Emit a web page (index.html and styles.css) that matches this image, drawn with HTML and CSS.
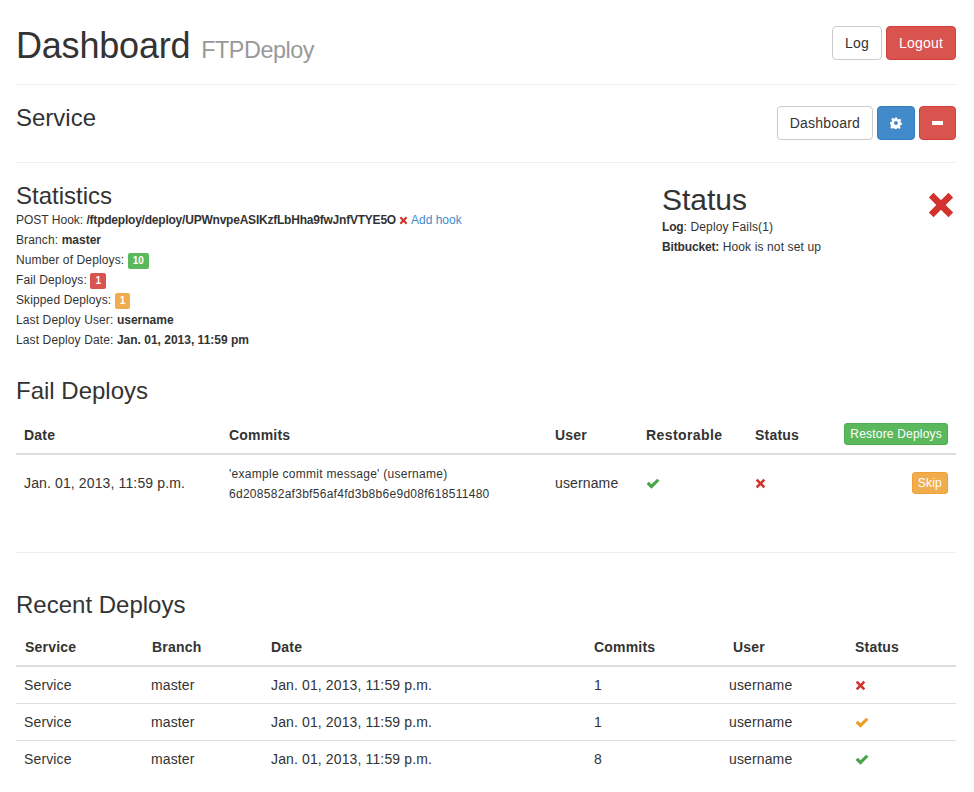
FILE: index.html
```html
<!DOCTYPE html>
<html>
<head>
  <title>FTPDeploy - Dashboard</title>
  <link rel="stylesheet" href="styles.css">
</head>
<body>
  <svg class="defs" width="0" height="0">
    <symbol id="i-remove" viewBox="0 0 24 24"><path d="M5.6 1.6 12 8l6.4-6.4 4 4L16 12l6.4 6.4-4 4L12 16l-6.4 6.4-4-4L8 12 1.6 5.6z"/></symbol>
    <symbol id="i-ok" viewBox="0 0 24 24"><path d="M1 13.5 4.8 9.700 9.400 14.300 19.200 4.500 23 8.300 9.400 21.900z"/></symbol>
    <symbol id="i-cog" viewBox="0 0 24 24"><path fill-rule="evenodd" d="M10 1h4l.7 3.200 2.100.9 2.800-1.800 2.800 2.800-1.800 2.800.9 2.100L23.700 11.700v3.900l-3.200.7-.9 2.100 1.800 2.800-2.800 2.800-2.800-1.800-2.100.9-.7 2.800h-4l-.7-3.200-2.100-.9-2.800 1.800-2.800-2.800 1.800-2.800-.9-2.100L.3 14v-4l3.200-.7.9-2.100-1.800-2.800 2.800-2.800 2.800 1.800 2.100-.9zM12 8a4 4 0 1 0 0 8 4 4 0 0 0 0-8z"/></symbol>
  </svg>

  <header class="page-header">
    <h1>Dashboard <small>FTPDeploy</small></h1>
    <div class="btn-row">
      <a class="btn btn-default">Log</a>
      <a class="btn btn-danger">Logout</a>
    </div>
  </header>

  <section class="service-bar">
    <h3>Service</h3>
    <div class="btn-row">
      <a class="btn btn-default">Dashboard</a>
      <a class="btn btn-primary btn-icon"><svg class="icon icon-cog"><use href="#i-cog"/></svg></a>
      <a class="btn btn-danger btn-icon btn-minus"><span class="minus"></span></a>
    </div>
  </section>

  <section class="overview">
    <div class="stats">
      <h3>Statistics</h3>
      <div class="line hook-line">POST Hook: <b class="hook">/ftpdeploy/deploy/UPWnvpeASIKzfLbHha9fwJnfVTYE5O</b> <svg class="icon icon-sm red"><use href="#i-remove"/></svg> <a class="link">Add hook</a></div>
      <div class="line">Branch: <b>master</b></div>
      <div class="line">Number of Deploys: <span class="label green">10</span></div>
      <div class="line">Fail Deploys: <span class="label danger">1</span></div>
      <div class="line">Skipped Deploys: <span class="label warning">1</span></div>
      <div class="line">Last Deploy User: <b>username</b></div>
      <div class="line">Last Deploy Date: <b>Jan. 01, 2013, 11:59 pm</b></div>
    </div>
    <div class="status">
      <div>
        <h2>Status</h2>
        <div class="line"><b>Log</b>: Deploy Fails(1)</div>
        <div class="line"><b>Bitbucket:</b> Hook is not set up</div>
      </div>
      <svg class="icon icon-big red"><use href="#i-remove"/></svg>
    </div>
  </section>

  <section class="fails">
    <h3>Fail Deploys</h3>
    <table class="table fail-table">
      <colgroup>
        <col class="c-date"><col class="c-commits"><col class="c-user"><col class="c-restore"><col class="c-status"><col>
      </colgroup>
      <thead>
        <tr>
          <th>Date</th>
          <th>Commits</th>
          <th>User</th>
          <th class="th-wide">Restorable</th>
          <th>Status</th>
          <th class="right"><a class="btn btn-xs btn-success">Restore Deploys</a></th>
        </tr>
      </thead>
      <tbody>
        <tr>
          <td>Jan. 01, 2013, 11:59 p.m.</td>
          <td class="commit">'example commit message' (username)<br>6d208582af3bf56af4fd3b8b6e9d08f618511480</td>
          <td>username</td>
          <td><svg class="icon icon-ok green-i"><use href="#i-ok"/></svg></td>
          <td><svg class="icon icon-x red"><use href="#i-remove"/></svg></td>
          <td class="right"><a class="btn btn-xs btn-warning">Skip</a></td>
        </tr>
      </tbody>
    </table>
  </section>

  <section class="recent">
    <h3>Recent Deploys</h3>
    <table class="table recent-table">
      <colgroup>
        <col class="r-service"><col class="r-branch"><col class="r-date"><col class="r-commits"><col class="r-user"><col>
      </colgroup>
      <thead>
        <tr>
          <th>Service</th>
          <th>Branch</th>
          <th>Date</th>
          <th>Commits</th>
          <th class="th-user">User</th>
          <th>Status</th>
        </tr>
      </thead>
      <tbody>
        <tr>
          <td>Service</td><td>master</td><td>Jan. 01, 2013, 11:59 p.m.</td><td>1</td><td>username</td>
          <td><svg class="icon icon-x red"><use href="#i-remove"/></svg></td>
        </tr>
        <tr>
          <td>Service</td><td>master</td><td>Jan. 01, 2013, 11:59 p.m.</td><td>1</td><td>username</td>
          <td><svg class="icon icon-ok orange"><use href="#i-ok"/></svg></td>
        </tr>
        <tr>
          <td>Service</td><td>master</td><td>Jan. 01, 2013, 11:59 p.m.</td><td>8</td><td>username</td>
          <td><svg class="icon icon-ok green-i"><use href="#i-ok"/></svg></td>
        </tr>
      </tbody>
    </table>
  </section>
</body>
</html>
```

FILE: styles.css
```css
* {
  box-sizing: border-box;
}

body {
  font-family: "Liberation Sans", Arial, sans-serif;
  font-size: 14px;
  line-height: 20px;
  color: #333;
  background-color: #fff;
  margin: 0;
  padding: 0 18px 0 16px;
}

.defs {
  position: absolute;
}

h1, h2, h3 {
  font-weight: 500;
  line-height: 1.1;
  margin: 0;
}

h1 {
  font-size: 36px;
  letter-spacing: -0.2px;
}

h1 small {
  margin-left: 1px;
  font-size: 23.4px;
  font-weight: 400;
  letter-spacing: -0.45px;
  color: #999;
}

h2 {
  font-size: 30px;
}

h3 {
  font-size: 24px;
}

.page-header {
  display: flex;
  justify-content: space-between;
  height: 85px;
  padding-top: 26px;
  border-bottom: 1px solid #eee;
}

.service-bar {
  display: flex;
  justify-content: space-between;
  height: 78px;
  padding-top: 20px;
  border-bottom: 1px solid #eee;
}

.btn-row {
  display: flex;
  gap: 4px;
}

.service-bar .btn-row {
  margin-top: 1px;
}

.btn {
  display: inline-flex;
  align-items: center;
  justify-content: center;
  height: 34px;
  padding: 6px 12px;
  font-size: 14px;
  letter-spacing: 0.2px;
  border: 1px solid transparent;
  border-radius: 4px;
  cursor: pointer;
}

.btn-default {
  color: #333;
  background-color: #fff;
  border-color: #ccc;
}

.btn-danger {
  color: #fff;
  background-color: #d9534f;
  border-color: #d43f3a;
}

.btn-primary {
  color: #fff;
  background-color: #428bca;
  border-color: #357ebd;
}

.btn-success {
  color: #fff;
  background-color: #5cb85c;
  border-color: #4cae4c;
}

.btn-warning {
  color: #fff;
  background-color: #f0ad4e;
  border-color: #eea236;
}

.btn-icon {
  width: 38px;
  padding: 0;
}

.btn-minus {
  width: 37px;
}

.btn-xs {
  height: 22px;
  padding: 1px 5px;
  font-size: 12px;
  font-weight: 400;
  line-height: 18px;
  border-radius: 3px;
}

.minus {
  width: 11px;
  height: 4px;
  background-color: #fff;
}

.icon {
  display: inline-block;
  fill: currentColor;
}

.icon-cog {
  width: 12px;
  height: 12px;
  color: #fff;
}

.icon-sm {
  width: 9px;
  height: 9px;
  vertical-align: -1px;
}

.icon-x {
  width: 11px;
  height: 11px;
  vertical-align: -1px;
}

.icon-ok {
  width: 14px;
  height: 14px;
  vertical-align: -2px;
}

.icon-big {
  width: 28px;
  height: 28px;
}

.red {
  color: #d2322d;
}

.green-i {
  color: #47a447;
}

.orange {
  color: #ed9c28;
}

.overview {
  display: flex;
  padding-top: 20px;
  font-size: 12px;
  letter-spacing: 0.12px;
}

.overview h2,
.overview h3 {
  letter-spacing: 0;
}

.stats {
  width: 646px;
}

.stats h3 {
  margin-bottom: 1px;
}

.line {
  height: 20px;
}

.line b {
  letter-spacing: 0;
}

.stats .hook-line {
  letter-spacing: 0;
}

.stats .hook {
  letter-spacing: -0.22px;
}

.link {
  color: #428bca;
}

.label {
  display: inline-block;
  padding: 2px 5px;
  font-size: 10px;
  font-weight: 700;
  line-height: 12px;
  color: #fff;
  border-radius: 2px;
  vertical-align: 0;
}

.label.green {
  background-color: #5cb85c;
}

.label.danger {
  background-color: #d9534f;
}

.label.warning {
  background-color: #f0ad4e;
}

.status {
  flex: 1;
  display: flex;
  justify-content: space-between;
  letter-spacing: 0.13px;
}

.status h2 {
  margin: 0 0 1px;
}

.status .line b {
  letter-spacing: -0.15px;
}

.status .icon-big {
  margin: 8px 1px 0 0;
}

.fails {
  height: 203px;
  padding-top: 28px;
  border-bottom: 1px solid #eee;
}

.recent {
  padding-top: 39px;
}

.table {
  width: 100%;
  border-collapse: collapse;
  table-layout: fixed;
  margin-top: 13px;
}

.table th {
  text-align: left;
  font-weight: 700;
  letter-spacing: 0.2px;
  padding: 8px;
  border-bottom: 2px solid #ddd;
}

.table .th-wide {
  letter-spacing: 0.4px;
}

.table td {
  padding: 8px;
  letter-spacing: 0.13px;
  border-top: 1px solid #ddd;
}

.table tbody tr:first-child td {
  border-top: 0;
}

.table .right {
  text-align: right;
}

.fail-table thead th {
  height: 36px;
  padding-top: 6px;
  padding-bottom: 6px;
}

.fail-table thead th.right {
  padding-top: 5px;
  padding-bottom: 7px;
}

.fail-table td {
  padding-top: 8px;
  padding-bottom: 10px;
}

.fail-table td.commit {
  padding-top: 9px;
  padding-bottom: 9px;
  font-size: 12px;
  letter-spacing: 0.28px;
}

.c-date {
  width: 205px;
}

.c-commits {
  width: 326px;
}

.c-user {
  width: 91px;
}

.c-restore {
  width: 109px;
}

.c-status {
  width: 60px;
}

.recent-table {
  margin-top: 10px;
}

.recent-table th:nth-child(-n+2) {
  padding-left: 9px;
}

.recent-table td {
  height: 37px;
  padding-top: 0;
  padding-bottom: 0;
}

.recent-table tbody tr:first-child td {
  height: 38px;
}

.recent-table tbody tr:last-child td {
  padding-bottom: 2px;
}

.r-service {
  width: 127px;
}

.r-branch {
  width: 120px;
}

.r-date {
  width: 323px;
}

.r-commits {
  width: 135px;
}

.r-user {
  width: 126px;
}

.recent-table .th-user {
  padding-left: 12px;
}
```
